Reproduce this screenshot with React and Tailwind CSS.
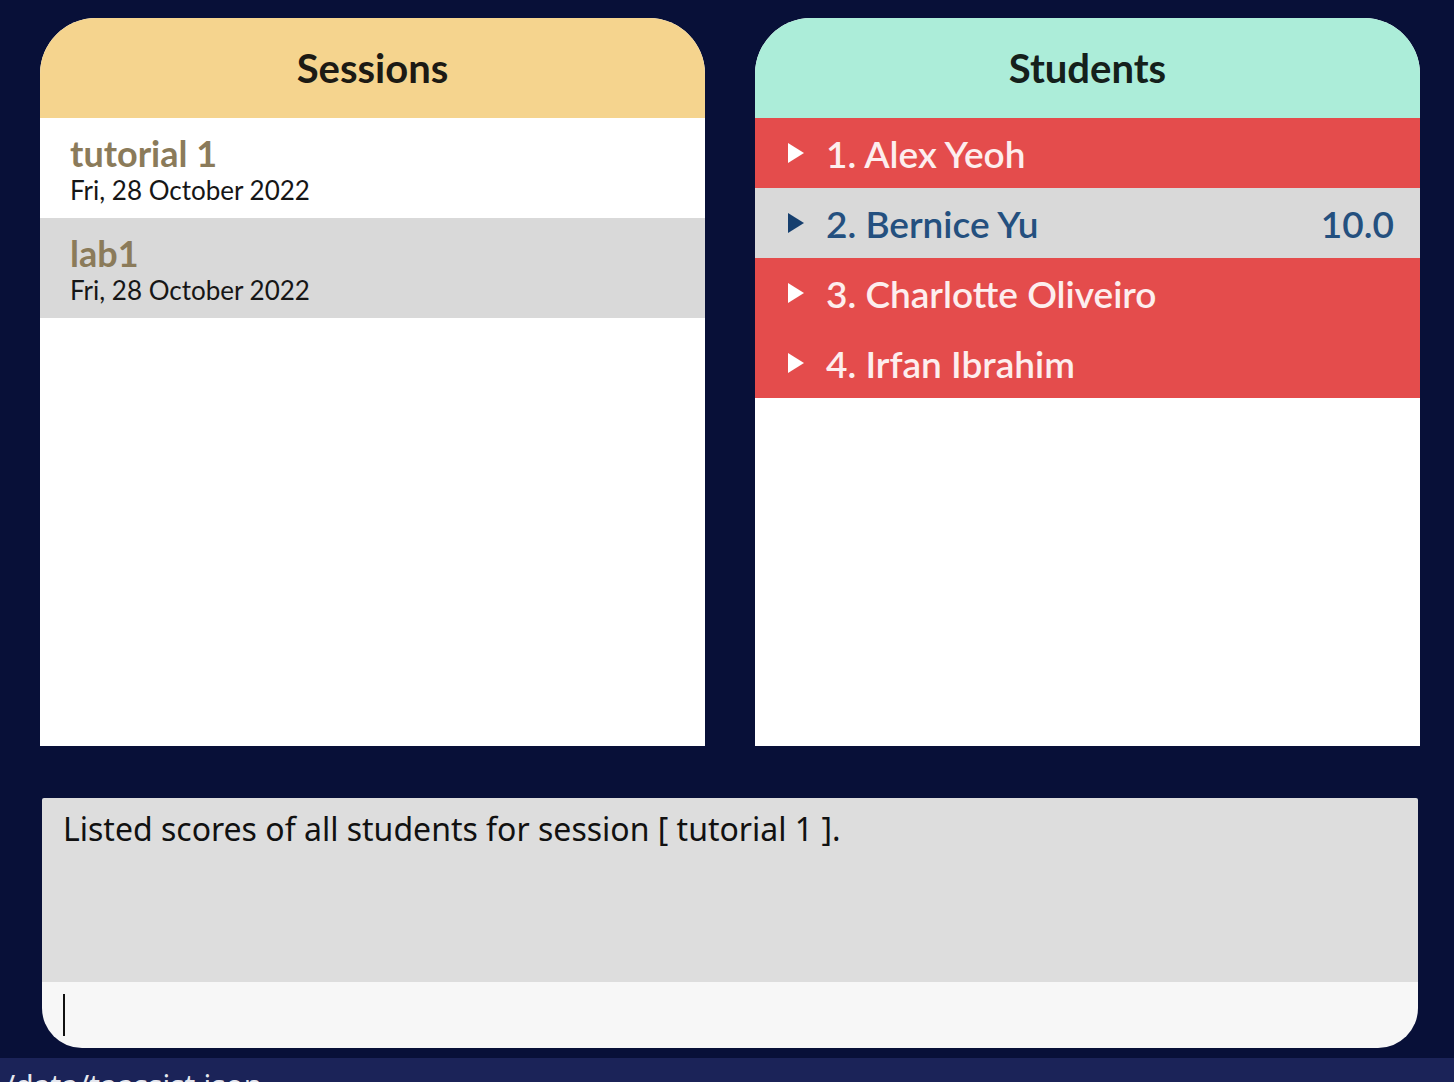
import React from "react";

const Tri = ({ color }) => (
  <svg width="18" height="22" viewBox="0 0 18 22" className="shrink-0">
    <polygon points="1,1 17,11 1,21" fill={color} />
  </svg>
);

const students = [
  { n: "1. Alex Yeoh", red: true },
  { n: "2. Bernice Yu", red: false, score: "10.0" },
  { n: "3. Charlotte Oliveiro", red: true },
  { n: "4. Irfan Ibrahim", red: true },
];

export default function App() {
  return (
    <div className="w-[1454px] h-[1082px] bg-[#081038] flex flex-col overflow-hidden" style={{ fontFamily: "Lato, 'Noto Sans', sans-serif" }}>
      <div className="flex gap-[50px] pl-[40px] pt-[18px] shrink-0">
        <div className="w-[665px] h-[728px] shrink-0 bg-white flex flex-col rounded-t-[56px] overflow-hidden">
          <div className="h-[100px] bg-[#f5d48e] flex items-center justify-center text-[40px] font-bold text-[#1c1a14]">Sessions</div>
          <div className="h-[100px] bg-white px-[30px] pt-[14px] flex flex-col">
            <div className="text-[36px] font-bold text-[#8b7b5a] leading-[42px]">tutorial 1</div>
            <div className="text-[26px] text-[#161616] leading-[32px]">Fri, 28 October 2022</div>
          </div>
          <div className="h-[100px] bg-[#d9d9d9] px-[30px] pt-[14px] flex flex-col">
            <div className="text-[36px] font-bold text-[#8b7b5a] leading-[42px]">lab1</div>
            <div className="text-[26px] text-[#161616] leading-[32px]">Fri, 28 October 2022</div>
          </div>
        </div>
        <div className="w-[665px] h-[728px] shrink-0 bg-white flex flex-col rounded-t-[56px] overflow-hidden">
          <div className="h-[100px] bg-[#acedd9] flex items-center justify-center text-[40px] font-bold text-[#14201b]">Students</div>
          {students.map((s) => (
            <div key={s.n} className={`h-[70px] flex items-center pl-[32px] pr-[26px] ${s.red ? "bg-[#e44c4c] text-[#fdeeee]" : "bg-[#d9d9d9] text-[#24507f]"}`}>
              <Tri color={s.red ? "#ffffff" : "#163f6e"} />
              <span className="ml-[21px] text-[37px] font-semibold leading-none">{s.n}</span>
              {s.score && <span className="ml-auto text-[37px] font-semibold leading-none">{s.score}</span>}
            </div>
          ))}
        </div>
      </div>
      <div className="mt-[52px] ml-[42px] w-[1376px] h-[250px] shrink-0 flex flex-col rounded-b-[40px] rounded-t-[2px] overflow-hidden">
        <div className="h-[184px] bg-[#dddddd] px-[21px] pt-[10px] text-[32px] text-[#111111] leading-[42px]" style={{ fontFamily: "'Noto Sans', sans-serif" }}>
          Listed scores of all students for session [ tutorial 1 ].
        </div>
        <div className="h-[66px] bg-[#f7f7f7] pl-[21px] pt-[12px]">
          <div className="w-[2px] h-[42px] bg-[#111111]" />
        </div>
      </div>
      <div className="mt-[10px] h-[24px] shrink-0 overflow-hidden bg-[#1b2358]">
        <div className="text-[#e6e8f0] text-[30px] leading-[40px] pt-[8px] pl-[4px] whitespace-nowrap" style={{ fontFamily: "'Noto Sans', sans-serif" }}>
          /data/taassist.json
        </div>
      </div>
    </div>
  );
}
